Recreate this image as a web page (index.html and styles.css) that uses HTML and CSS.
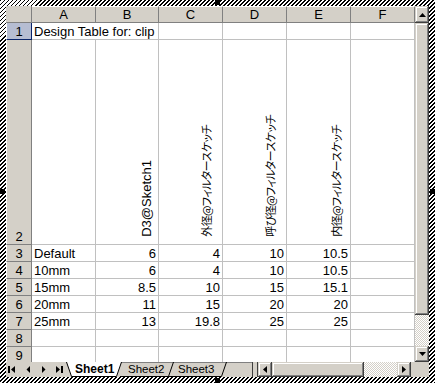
FILE: index.html
```html
<!DOCTYPE html>
<html>
<head>
<meta charset="utf-8">
<link rel="stylesheet" href="styles.css">
</head>
<body>
<div class="frame">
  <div class="handle h-top"></div>
  <div class="handle h-bottom"></div>
  <div class="handle h-left"></div>
  <div class="handle h-right"></div>
  <div class="win">
    <div class="sheet">
      <div class="grid">
        <div class="hd corner"></div>
        <div class="hd colh">A</div>
        <div class="hd colh">B</div>
        <div class="hd colh">C</div>
        <div class="hd colh">D</div>
        <div class="hd colh">E</div>
        <div class="hd colh">F</div>

        <div class="hd rowh sel">1</div>
        <div class="c span2">Design Table for: clip</div>
        <div class="c"></div><div class="c"></div><div class="c"></div><div class="c"></div>

        <div class="hd rowh">2</div>
        <div class="c"></div>
        <div class="c vcell pb"><span class="vt lat">D3@Sketch1</span></div>
        <div class="c vcell pj"><span class="vt jp">外径@フィルタースケッチ</span></div>
        <div class="c vcell pj"><span class="vt jp">呼び径@フィルタースケッチ</span></div>
        <div class="c vcell pe"><span class="vt jp">内径@フィルタースケッチ</span></div>
        <div class="c"></div>

        <div class="hd rowh">3</div>
        <div class="c">Default</div><div class="c n">6</div><div class="c n">4</div><div class="c n">10</div><div class="c n">10.5</div><div class="c"></div>
        <div class="hd rowh">4</div>
        <div class="c">10mm</div><div class="c n">6</div><div class="c n">4</div><div class="c n">10</div><div class="c n">10.5</div><div class="c"></div>
        <div class="hd rowh">5</div>
        <div class="c">15mm</div><div class="c n">8.5</div><div class="c n">10</div><div class="c n">15</div><div class="c n">15.1</div><div class="c"></div>
        <div class="hd rowh">6</div>
        <div class="c">20mm</div><div class="c n">11</div><div class="c n">15</div><div class="c n">20</div><div class="c n">20</div><div class="c"></div>
        <div class="hd rowh">7</div>
        <div class="c">25mm</div><div class="c n">13</div><div class="c n">19.8</div><div class="c n">25</div><div class="c n">25</div><div class="c"></div>
        <div class="hd rowh">8</div>
        <div class="c"></div><div class="c"></div><div class="c"></div><div class="c"></div><div class="c"></div><div class="c"></div>
        <div class="hd rowh">9</div>
        <div class="c"></div><div class="c"></div><div class="c"></div><div class="c"></div><div class="c"></div><div class="c"></div>
      </div>
    </div>

    <div class="vscroll">
      <div class="btn vbtn-up"><svg width="7" height="4" viewBox="0 0 7 4"><path d="M3.5 0 L7 4 L0 4 Z" fill="#000"/></svg></div>
      <div class="btn vthumb"></div>
      <div class="track"></div>
      <div class="btn vbtn-down"><svg width="7" height="4" viewBox="0 0 7 4"><path d="M0 0 L7 0 L3.5 4 Z" fill="#000"/></svg></div>
    </div>

    <div class="bar">
      <div class="nav">
        <div class="navb"><svg width="8" height="7" viewBox="0 0 8 7"><rect x="0" y="0" width="2" height="7" fill="#000"/><path d="M7 0 L7 7 L3 3.5 Z" fill="#000"/></svg></div>
        <div class="navb"><svg width="5" height="7" viewBox="0 0 5 7"><path d="M4 0 L4 7 L0.5 3.5 Z" fill="#000"/></svg></div>
        <div class="navb"><svg width="5" height="7" viewBox="0 0 5 7"><path d="M1 0 L1 7 L4.5 3.5 Z" fill="#000"/></svg></div>
        <div class="navb"><svg width="8" height="7" viewBox="0 0 8 7"><path d="M1 0 L1 7 L5 3.5 Z" fill="#000"/><rect x="6" y="0" width="2" height="7" fill="#000"/></svg></div>
      </div>
      <div class="tabs">
        <svg class="tabshapes" width="186" height="15" viewBox="0 0 186 15">
          <line x1="0" y1="0.5" x2="186" y2="0.5" stroke="#808080"/>
          <path d="M107.5 0 L102.5 14.5 L54 14.5" fill="none" stroke="#000"/>
          <path d="M160.5 0 L155.5 14.5 L100 14.5" fill="none" stroke="#000"/>
          <path d="M0.5 0 L5.5 14.5 L50.5 14.5 L55.5 0 Z" fill="#fff"/>
          <path d="M0.5 0 L5.5 14.5 L50.5 14.5 L55.5 0" fill="none" stroke="#000"/>
        </svg>
        <span class="tab active">Sheet1</span>
        <span class="tab t2">Sheet2</span>
        <span class="tab t3">Sheet3</span>
      </div>
      <div class="split"></div>
      <div class="btn hbtn"><svg width="4" height="7" viewBox="0 0 4 7"><path d="M4 0 L4 7 L0 3.5 Z" fill="#000"/></svg></div>
      <div class="btn hthumb"></div>
      <div class="track htrack"></div>
      <div class="btn hbtn"><svg width="4" height="7" viewBox="0 0 4 7"><path d="M0 0 L0 7 L4 3.5 Z" fill="#000"/></svg></div>
      <div class="hend"></div>
    </div>
    <div class="sizer"></div>
  </div>
</div>
</body>
</html>
```

FILE: styles.css
```css
html, body {
  margin: 0;
  padding: 0;
  background: #fff;
}

.frame {
  position: relative;
  width: 435px;
  height: 383px;
  box-sizing: border-box;
  padding: 6px;
  background: repeating-linear-gradient(135deg, #000 0 1.4px, #fff 1.4px 2.83px);
}

.handle {
  position: absolute;
  width: 5px;
  height: 5px;
  background: #000;
}
.h-top { top: 0; left: 215px; }
.h-bottom { bottom: 0; left: 215px; }
.h-left { left: 0; top: 189px; }
.h-right { right: 0; top: 189px; }

.win {
  width: 423px;
  height: 371px;
  display: grid;
  grid-template-columns: 409px 14px;
  grid-template-rows: 356px 15px;
  background: #d4d0c8;
  overflow: hidden;
}

.sheet {
  overflow: hidden;
  background: #fff;
}

.grid {
  display: grid;
  grid-template-columns: 26px 64px 63px 64px 64px 64px 64px;
  grid-template-rows: 17px 17px 205px repeat(7, 17px);
  font-family: "Liberation Sans", Arial, sans-serif;
  font-size: 13px;
  color: #000;
}

.hd {
  background: #d4d0c8;
  box-sizing: border-box;
  border-right: 1px solid #808080;
  border-bottom: 1px solid #808080;
  display: flex;
  justify-content: center;
  align-items: flex-end;
  line-height: 15px;
}
.colh {
  border-top: 1px solid #fff;
}
.rowh {
  border-left: 1px solid #fff;
}
.rowh.sel {
  background: #b6bdd2;
  border-right-color: #0a246a;
  border-bottom-color: #0a246a;
}

.c {
  box-sizing: border-box;
  border-right: 1px solid #c0c0c0;
  border-bottom: 1px solid #c0c0c0;
  display: flex;
  align-items: flex-end;
  padding: 0 2px;
  line-height: 15px;
  white-space: nowrap;
}
.span2 {
  grid-column: span 2;
}
.n {
  justify-content: flex-end;
}

.vcell {
  justify-content: flex-end;
}
.pb { padding-right: 4px; padding-bottom: 7px; }
.pj { padding-right: 9px; padding-bottom: 7px; }
.pe { padding-right: 7px; padding-bottom: 7px; }

.vt {
  writing-mode: vertical-rl;
  text-orientation: sideways;
  transform: rotate(180deg);
  white-space: nowrap;
  line-height: 14px;
}
.lat {
  font-family: "Liberation Sans", Arial, sans-serif;
  font-size: 13px;
}
.jp {
  font-family: "Noto Sans CJK JP", sans-serif;
  font-size: 11px;
  font-feature-settings: "palt";
  letter-spacing: -0.6px;
  line-height: 13px;
}

/* 3D buttons */
.btn {
  background: #d4d0c8;
  box-shadow: inset -1px -1px #404040, inset 1px 1px #d4d0c8, inset -2px -2px #808080, inset 2px 2px #fff;
  display: flex;
  align-items: center;
  justify-content: center;
}

.track {
  background: repeating-conic-gradient(#fff 0 25%, #d4d0c8 0 50%) 0 0 / 2px 2px;
}

.vscroll {
  display: grid;
  grid-template-rows: 17px 292px 31px 16px;
}

.bar {
  display: flex;
  height: 15px;
  font-family: "Liberation Sans", Arial, sans-serif;
}

.nav {
  width: 60px;
  display: flex;
  flex: none;
}
.navb {
  width: 15px;
  display: flex;
  align-items: center;
  justify-content: center;
}
.navb:first-child { justify-content: flex-start; padding-left: 2px; box-sizing: border-box; }

.tabs {
  position: relative;
  width: 186px;
  flex: none;
}
.tabshapes {
  position: absolute;
  left: 0;
  top: 0;
}
.tab {
  position: absolute;
  top: 0;
  line-height: 14px;
  font-size: 11.5px;
  color: #000;
}
.tab.active {
  left: 9px;
  font-weight: bold;
  font-size: 12px;
}
.t2 { left: 62px; }
.t3 { left: 112px; }

.split {
  width: 6px;
  flex: none;
  box-sizing: border-box;
  border-left: 1px solid #404040;
  border-right: 1px solid #404040;
  background: #d4d0c8;
}

.hbtn {
  width: 14px;
  flex: none;
}
.hthumb {
  width: 92px;
  flex: none;
}
.htrack {
  width: 33px;
  flex: none;
}
.hend {
  width: 4px;
  flex: none;
  background: #d4d0c8;
}

.sizer {
  background: #d4d0c8;
}
```
